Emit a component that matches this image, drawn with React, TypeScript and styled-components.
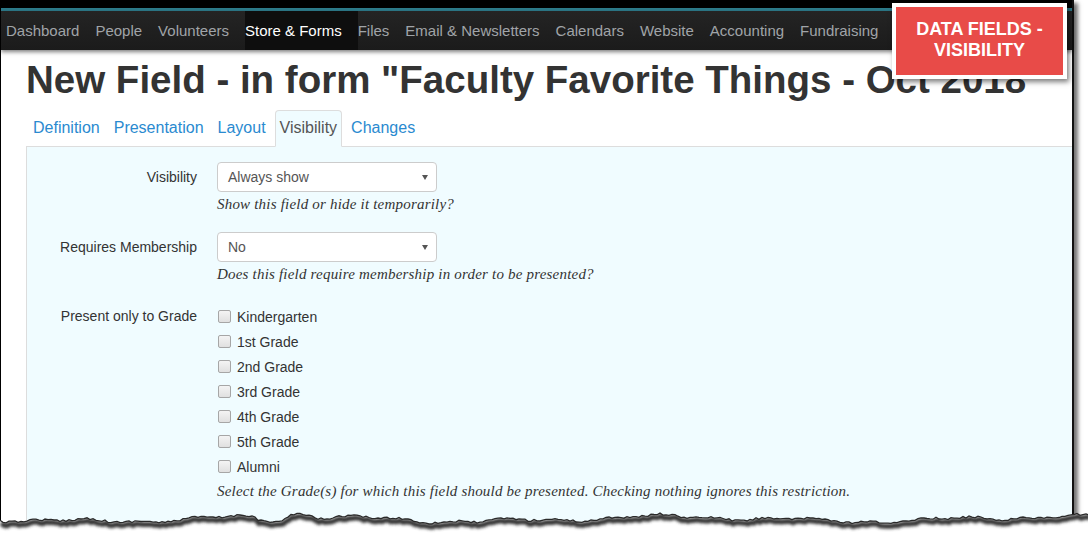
import React from "react";
import styled, { createGlobalStyle } from "styled-components";

const Global = createGlobalStyle`
  html, body { margin: 0; padding: 0; background: #fff; }
  body { font-family: "Liberation Sans", Arial, sans-serif; }
  * { box-sizing: border-box; }
`;

const PANEL_BG = "#f0fcff";

const Page = styled.div`
  position: relative;
  width: 1088px;
  height: 540px;
  overflow: hidden;
  background: #fff;
`;

const Frame = styled.div`
  position: relative;
  width: 1074px;
  height: 540px;
  border-left: 1px solid #000;
  border-right: 2px solid #111;
  box-shadow: 4px 3px 4px rgba(0, 0, 0, 0.55);
  background: #fff;
  display: flex;
  flex-direction: column;
  color: #333;
`;

const TopStrip = styled.div`
  height: 11px;
  background: #000;
  border-bottom: 3px solid #2d7b8b;
  flex: none;
`;

const NavBar = styled.nav`
  position: relative;
  z-index: 1;
  flex: none;
  display: flex;
  height: 39px;
  padding-left: 5px;
  background: linear-gradient(#242424, #1b1b1b);
  box-shadow: 0 2px 4px rgba(0, 0, 0, 0.5);
`;

const NavItem = styled.a<{ $active?: boolean }>`
  display: block;
  padding-right: 16px;
  line-height: 39px;
  font-size: 15px;
  white-space: nowrap;
  color: ${(p) => (p.$active ? "#ffffff" : "#a0a4a8")};
  background: ${(p) => (p.$active ? "#0e0e0e" : "transparent")};
`;

const Badge = styled.div`
  position: absolute;
  z-index: 3;
  top: 3px;
  left: 892px;
  width: 175px;
  height: 76px;
  border: 4px solid #fff;
  background: #e84b48;
  box-shadow: 2px 3px 5px rgba(0, 0, 0, 0.5);
  display: flex;
  align-items: center;
  justify-content: center;
  padding-bottom: 3px;
  text-align: center;
  color: #fff;
  font-weight: bold;
  font-size: 18px;
  line-height: 21px;
`;

const Title = styled.h1`
  flex: none;
  margin: 8px 0 0 25px;
  font-size: 38.5px;
  line-height: 44px;
  font-weight: bold;
  color: #333;
  white-space: nowrap;
`;

const TabBar = styled.div`
  flex: none;
  display: flex;
  margin: 8px 0 0 25px;
  padding-left: 2px;
  border-bottom: 1px solid #ddd;
`;

const Tab = styled.a<{ $active?: boolean }>`
  display: block;
  padding: 7px 4px 8px;
  margin: 0 4px -1px 0;
  font-size: 16px;
  line-height: 20px;
  border: 1px solid ${(p) => (p.$active ? "#ddd" : "transparent")};
  border-bottom-color: ${(p) => (p.$active ? PANEL_BG : "transparent")};
  border-radius: 4px 4px 0 0;
  background: ${(p) => (p.$active ? PANEL_BG : "transparent")};
  color: ${(p) => (p.$active ? "#555" : "#2a8ad0")};
`;

const Panel = styled.div`
  flex: 1;
  margin-left: 25px;
  border-left: 1px solid #ddd;
  background: ${PANEL_BG};
  padding-top: 15px;
`;

const Row = styled.div<{ $top?: number }>`
  display: grid;
  grid-template-columns: 170px 1fr;
  column-gap: 20px;
  margin-bottom: 18px;
  padding-top: ${(p) => p.$top ?? 0}px;
`;

const Label = styled.div<{ $lh: number }>`
  text-align: right;
  font-size: 14px;
  line-height: ${(p) => p.$lh}px;
  color: #333;
`;

const Control = styled.div`
  display: flex;
  flex-direction: column;
`;

const Select = styled.div`
  position: relative;
  width: 220px;
  height: 30px;
  border: 1px solid #ccc;
  border-radius: 4px;
  background: #fff;
  padding-left: 10px;
  font-size: 14px;
  line-height: 28px;
  color: #555;
`;

const Caret = styled.span`
  position: absolute;
  right: 8px;
  top: 12px;
  width: 0;
  height: 0;
  border-left: 3.5px solid transparent;
  border-right: 3.5px solid transparent;
  border-top: 5px solid #555;
`;

const Help = styled.div`
  margin-top: 2px;
  font-family: "Liberation Serif", "Times New Roman", serif;
  font-style: italic;
  font-size: 15px;
  letter-spacing: 0.2px;
  line-height: 20px;
  color: #333;
  white-space: nowrap;
`;

const CheckItem = styled.label`
  display: flex;
  align-items: center;
  height: 25px;
  gap: 6px;
  font-size: 14px;
  color: #333;
`;

const Box = styled.span`
  display: block;
  width: 13px;
  height: 13px;
  margin-left: 1px;
  border: 1px solid #a6a6a6;
  border-radius: 2px;
  background: linear-gradient(#f4f4f4, #e0e0e0);
`;

const Torn = styled.svg`
  position: absolute;
  z-index: 4;
  left: 0;
  bottom: 0;
`;

const navItems = [
  "Dashboard",
  "People",
  "Volunteers",
  "Store & Forms",
  "Files",
  "Email & Newsletters",
  "Calendars",
  "Website",
  "Accounting",
  "Fundraising",
];

const tabs = ["Definition", "Presentation", "Layout", "Visibility", "Changes"];

const grades = [
  "Kindergarten",
  "1st Grade",
  "2nd Grade",
  "3rd Grade",
  "4th Grade",
  "5th Grade",
  "Alumni",
];

function buildEdge() {
  let seed = 12345;
  const rand = () => {
    seed = (seed * 16807) % 2147483647;
    return seed / 2147483647;
  };
  const pts: string[] = [];
  for (let x = 0; x <= 1090; x += 3) {
    let y =
      19 +
      2.2 * Math.sin(x / 61) +
      1.7 * Math.sin(x / 23 + 1.3) +
      1.1 * Math.sin(x / 8.3 + 0.4) +
      (rand() - 0.5) * 2.2;
    if (x > 255 && x < 285) y += 3;
    if (x > 290 && x < 315) y -= 3;
    pts.push(`${x},${y.toFixed(1)}`);
  }
  const line = "M" + pts.join(" L");
  return { line, fill: line + " L1090,40 L0,40 Z" };
}

const edge = buildEdge();

export default function App() {
  return (
    <Page>
      <Global />
      <Frame>
        <TopStrip />
        <NavBar>
          {navItems.map((n) => (
            <NavItem key={n} $active={n === "Store & Forms"}>
              {n}
            </NavItem>
          ))}
        </NavBar>
        <Title>New Field - in form "Faculty Favorite Things - Oct 2018"</Title>
        <TabBar>
          {tabs.map((t) => (
            <Tab key={t} $active={t === "Visibility"}>
              {t}
            </Tab>
          ))}
        </TabBar>
        <Panel>
          <Row>
            <Label $lh={30}>Visibility</Label>
            <Control>
              <Select>
                Always show
                <Caret />
              </Select>
              <Help>Show this field or hide it temporarily?</Help>
            </Control>
          </Row>
          <Row>
            <Label $lh={30}>Requires Membership</Label>
            <Control>
              <Select>
                No
                <Caret />
              </Select>
              <Help>Does this field require membership in order to be presented?</Help>
            </Control>
          </Row>
          <Row $top={2}>
            <Label $lh={25}>Present only to Grade</Label>
            <Control>
              {grades.map((g) => (
                <CheckItem key={g}>
                  <Box />
                  {g}
                </CheckItem>
              ))}
              <Help>
                Select the Grade(s) for which this field should be presented. Checking nothing
                ignores this restriction.
              </Help>
            </Control>
          </Row>
        </Panel>
      </Frame>
      <Badge>
        DATA FIELDS -
        <br />
        VISIBILITY
      </Badge>
      <Torn width="1088" height="40" viewBox="0 0 1088 40">
        <defs>
          <clipPath id="below">
            <path d={edge.fill} />
          </clipPath>
          <filter id="soft" x="-5%" y="-50%" width="110%" height="200%">
            <feGaussianBlur stdDeviation="1.5" />
          </filter>
        </defs>
        <path d={edge.fill} fill="#fff" />
        <g clipPath="url(#below)">
          <path
            d={edge.line}
            fill="none"
            stroke="#333"
            strokeWidth="5"
            transform="translate(1,3)"
            filter="url(#soft)"
          />
        </g>
        <path d={edge.line} fill="none" stroke="#2a2a2a" strokeWidth="1.3" />
      </Torn>
    </Page>
  );
}
